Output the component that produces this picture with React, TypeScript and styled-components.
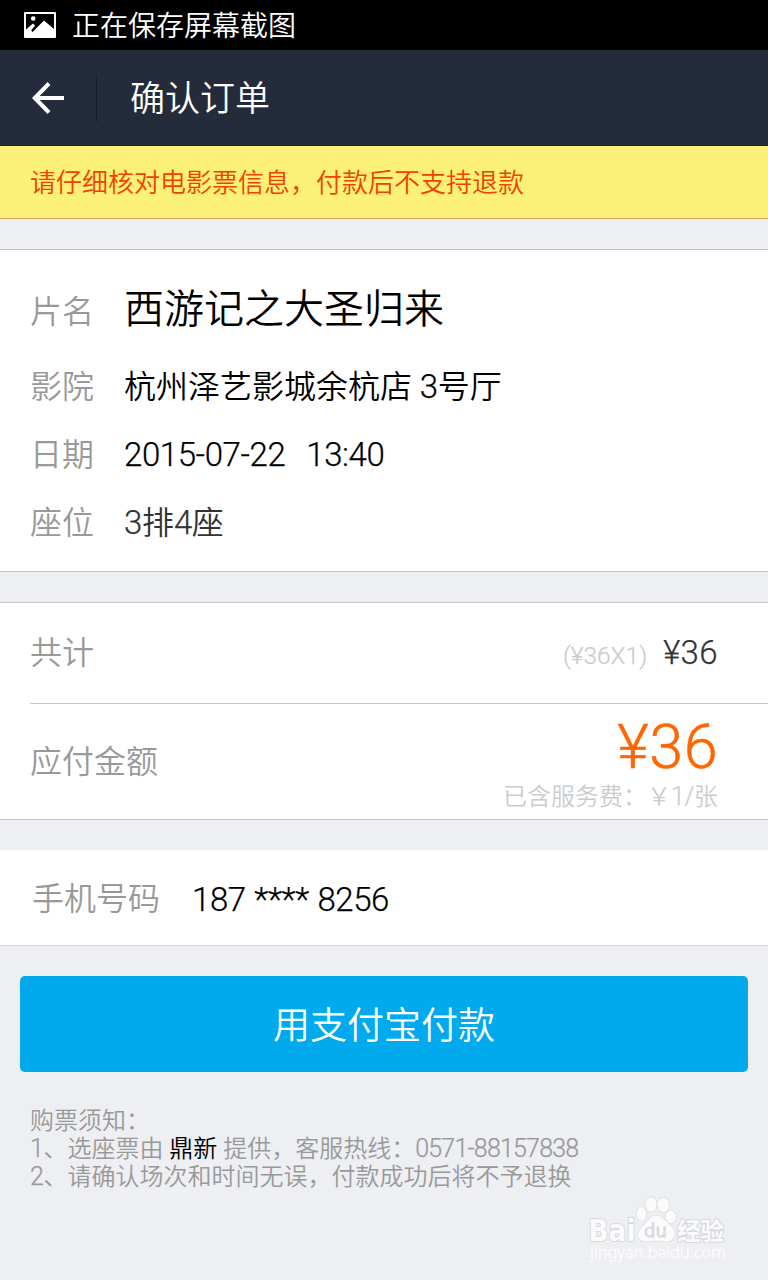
import React from "react";
import styled, { createGlobalStyle } from "styled-components";

const GlobalStyle = createGlobalStyle`
  * { box-sizing: border-box; }
  html, body { margin: 0; padding: 0; }
  body {
    background: #edeff3;
    font-family: Roboto, "Noto Sans CJK SC", sans-serif;
    font-weight: 350;
    color: #000;
  }
`;

const Screen = styled.main`
  position: relative;
  width: 768px;
  height: 1280px;
  background: #edeff3;
  overflow: hidden;
`;

const StatusBar = styled.div`
  display: flex;
  align-items: center;
  gap: 16px;
  height: 50px;
  padding: 0 24px;
  background: #000;
  color: #fff;
  font-size: 28px;
  line-height: 50px;
`;

const StatusText = styled.span`
  padding-top: 4px;
`;

const Header = styled.header`
  display: flex;
  align-items: center;
  height: 96px;
  padding-left: 32px;
  background: #242b3a;
  border-bottom: 1px solid #1c2238;
  color: #fff;
`;

const HeaderRule = styled.div`
  width: 1px;
  height: 48px;
  margin: 0 33px 0 32px;
  background: #191e2a;
`;

const Title = styled.h1`
  margin: 0;
  padding-top: 4px;
  font-size: 35px;
  font-weight: 350;
  line-height: 93px;
`;

const Notice = styled.div`
  height: 73px;
  padding-left: 30px;
  background: #fcf178;
  border-bottom: 1px solid #d6a65c;
  color: #f04300;
  font-size: 26px;
  line-height: 75px;
`;

const Card = styled.section<{ $gap: number; $plainTop?: boolean }>`
  margin-top: ${(p) => p.$gap}px;
  background: #fff;
  border-top: ${(p) => (p.$plainTop ? "0" : "1px solid #c4c6c9")};
  border-bottom: 1px solid ${(p) => (p.$plainTop ? "#d4d6d9" : "#c4c6c9")};
`;

const DetailList = styled.div`
  height: 321px;
  padding: 21px 30px 0;
`;

const Detail = styled.div<{ $height?: number }>`
  display: flex;
  align-items: baseline;
  height: ${(p) => p.$height ?? 68}px;
  font-size: 32px;
  line-height: ${(p) => (p.$height ? 78 : 68)}px;
`;

const Label = styled.span<{ $width?: number }>`
  width: ${(p) => p.$width ?? 94}px;
  color: #999;
  font-size: 32px;
`;

const Value = styled.span<{ $size?: number; $color?: string }>`
  font-size: ${(p) => p.$size ?? 32}px;
  color: ${(p) => p.$color ?? "#000"};
  white-space: pre;
`;

const Digits = styled.span<{ $size?: number; $tracking?: number; $space?: number }>`
  font-size: ${(p) => p.$size ?? 33}px;
  letter-spacing: ${(p) => p.$tracking ?? -0.4}px;
  word-spacing: ${(p) => p.$space ?? 0}px;
  -webkit-text-stroke: 0.25px currentColor;
`;

const TotalRow = styled.div`
  display: flex;
  align-items: baseline;
  height: 101px;
  margin-left: 30px;
  padding-right: 50px;
  border-bottom: 1px solid #c4c6c9;
  line-height: 100px;
`;

const Formula = styled.span`
  margin-left: auto;
  margin-right: 16px;
  color: #ccc;
`;

const PayableRow = styled.div`
  display: flex;
  justify-content: space-between;
  height: 115px;
  padding: 0 50px 0 30px;
  line-height: 116px;
`;

const Payable = styled.div`
  display: flex;
  flex-direction: column;
  align-items: flex-end;
`;

const Amount = styled.strong`
  height: 78px;
  color: #ff6600;
  font-size: 61px;
  font-weight: 350;
  letter-spacing: 0.5px;
  line-height: 87px;
  -webkit-text-stroke: 0.5px currentColor;
`;

const Fee = styled.span`
  color: #ccc;
  font-size: 24px;
  line-height: 30px;
`;

const PhoneRow = styled.div`
  display: flex;
  height: 95px;
  padding-left: 32px;
  line-height: 99px;
`;

const PayButton = styled.button`
  display: block;
  width: 728px;
  height: 96px;
  margin: 30px 20px 0;
  padding: 5px 0 0;
  border: 0;
  border-radius: 5px;
  background: #01aaed;
  color: #fff;
  font: inherit;
  font-size: 37px;
  line-height: 91px;
`;

const Notes = styled.div`
  padding: 35px 30px 0;
  color: #999;
  font-size: 24px;
  line-height: 28px;
`;

const Note = styled.p`
  height: 28px;
  margin: 0;
  white-space: pre;
`;

const Provider = styled.span`
  color: #000;
`;

const Watermark = styled.svg`
  position: absolute;
  left: 580px;
  top: 1190px;
`;

const PictureIcon = () => (
  <svg width="32" height="26" viewBox="0 0 32 26">
    <path
      fillRule="evenodd"
      fill="#fff"
      d="M1 0H31Q32 0 32 1V25Q32 26 31 26H1Q0 26 0 25V1Q0 0 1 0ZM2 2V17.5L9 11.5L11 13.5L7.2 18.5L8.5 20L20 8.5L30 17V2Z"
    />
    <circle cx="9.2" cy="6.5" r="2.3" fill="#fff" />
  </svg>
);

const BackIcon = () => (
  <svg width="32" height="32" viewBox="0 0 32 32" fill="none" stroke="#fff" strokeWidth="4">
    <path d="M17 1.5L2.8 16L17 30.5M3 16H32" />
  </svg>
);

const BaiduMark = () => (
  <Watermark width="160" height="80" viewBox="0 0 160 80">
    <g fill="#fbfbfc" stroke="#d7d9dd" strokeWidth="1.2" paintOrder="stroke">
      <text x="8.5" y="50.5" fontFamily="DejaVu Sans" fontWeight="700" fontSize="30" textLength="47" lengthAdjust="spacingAndGlyphs" strokeWidth="2">Bai</text>
      <ellipse cx="61.5" cy="24" rx="5" ry="7" />
      <ellipse cx="71" cy="14.5" rx="5.7" ry="7.3" />
      <ellipse cx="83.3" cy="15" rx="5.7" ry="7.3" />
      <ellipse cx="90.8" cy="27" rx="5.3" ry="6.5" />
      <path d="M76 25.5C83 25.5 86 32 92 37C98 43 94 51.5 87 51.5C82 51.5 79 50.5 76 50.5C73 50.5 70 51.5 66 51.5C57 51.5 56 43 61 38C67 33 69 25.5 76 25.5Z" />
      <text x="97" y="49.5" fontFamily="Noto Sans CJK SC" fontWeight="700" fontSize="24" textLength="47" lengthAdjust="spacingAndGlyphs" strokeWidth="2">经验</text>
    </g>
    <text x="64" y="46.5" fontFamily="DejaVu Sans" fontSize="18" textLength="23" lengthAdjust="spacingAndGlyphs" fill="#e3e4e8" stroke="#c9cbd0" strokeWidth="1.2" paintOrder="stroke">du</text>
    <text x="10" y="68" fontFamily="Noto Sans" fontSize="15.5" textLength="136" lengthAdjust="spacingAndGlyphs" fill="#fdfdfe" stroke="#fdfdfe" strokeWidth="0.3">jingyan.baidu.com</text>
  </Watermark>
);

export default function App() {
  return (
    <>
      <GlobalStyle />
      <Screen>
        <StatusBar>
          <PictureIcon />
          <StatusText>正在保存屏幕截图</StatusText>
        </StatusBar>
        <Header>
          <BackIcon />
          <HeaderRule />
          <Title>确认订单</Title>
        </Header>
        <Notice>请仔细核对电影票信息，付款后不支持退款</Notice>

        <Card $gap={30}>
          <DetailList>
            <Detail $height={82}>
              <Label>片名</Label>
              <Value $size={40}>西游记之大圣归来</Value>
            </Detail>
            <Detail>
              <Label>影院</Label>
              <Value>
                杭州泽艺影城余杭店 <Digits>3</Digits>号厅
              </Value>
            </Detail>
            <Detail>
              <Label>日期</Label>
              <Value>
                <Digits $space={2.8}>{"2015-07-22  13:40"}</Digits>
              </Value>
            </Detail>
            <Detail>
              <Label>座位</Label>
              <Value $color="#333">
                <Digits>3</Digits>排<Digits>4</Digits>座
              </Value>
            </Detail>
          </DetailList>
        </Card>

        <Card $gap={30}>
          <TotalRow>
            <Label>共计</Label>
            <Formula>
              <Digits $size={24.5} $tracking={0}>(¥36X1)</Digits>
            </Formula>
            <Value $color="#333">
              <Digits $tracking={0.4}>¥36</Digits>
            </Value>
          </TotalRow>
          <PayableRow>
            <Label $width={140}>应付金额</Label>
            <Payable>
              <Amount>¥36</Amount>
              <Fee>
                已含服务费：￥<Digits $size={25}>1/</Digits>张
              </Fee>
            </Payable>
          </PayableRow>
        </Card>

        <Card $gap={30} $plainTop>
          <PhoneRow>
            <Label $width={160}>手机号码</Label>
            <Value>
              <Digits $space={1}>187 **** 8256</Digits>
            </Value>
          </PhoneRow>
        </Card>

        <PayButton>用支付宝付款</PayButton>

        <Notes>
          <Note>购票须知：</Note>
          <Note>
            <Digits $size={25}>1</Digits>、选座票由 <Provider>鼎新</Provider> 提供，客服热线：
            <Digits $size={25} $tracking={-0.8}>0571-88157838</Digits>
          </Note>
          <Note>
            <Digits $size={25}>2</Digits>、请确认场次和时间无误，付款成功后将不予退换
          </Note>
        </Notes>
        <BaiduMark />
      </Screen>
    </>
  );
}
